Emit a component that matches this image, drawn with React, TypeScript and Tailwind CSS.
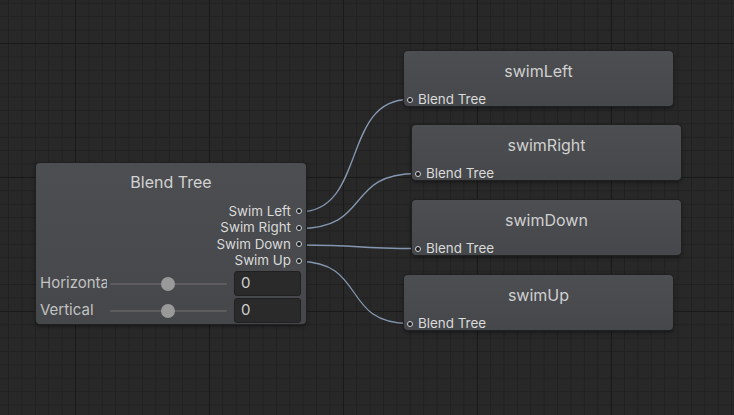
import React from 'react';

type Target = { name: string; x: number; y: number };

const targets: Target[] = [
  { name: 'swimLeft', x: 404, y: 51 },
  { name: 'swimRight', x: 412, y: 125 },
  { name: 'swimDown', x: 412, y: 200 },
  { name: 'swimUp', x: 404, y: 275 },
];

const outputs = ['Swim Left', 'Swim Right', 'Swim Down', 'Swim Up'];

function wire(x1: number, y1: number, x2: number, y2: number) {
  const d = Math.max(40, (x2 - x1) * 0.62);
  return `M ${x1} ${y1} C ${x1 + d} ${y1}, ${x2 - d} ${y2}, ${x2} ${y2}`;
}

function Port() {
  return <span className="block w-[6px] h-[6px] rounded-full border border-[#cfd3d8] bg-[#1c1c1c] shrink-0" />;
}

function ParamRow({ label }: { label: string }) {
  return (
    <div className="flex items-center h-[25px]">
      <div className="w-[71px] pl-[4px] overflow-hidden whitespace-nowrap text-[15px] text-[#c2c2c2]">{label}</div>
      <div className="relative w-[117px] ml-[3px] h-[14px] flex items-center">
        <div className="w-full h-[2px] bg-[#5d5d5d] rounded" />
        <div className="absolute left-[51px] w-[14px] h-[14px] rounded-full bg-[#999999]" />
      </div>
      <div className="ml-[7px] w-[67px] h-[25px] rounded-[3px] bg-[#2a2a2a] border border-[#202020] flex items-center pl-[6px] text-[15px] text-[#d0d0d0]">
        0
      </div>
    </div>
  );
}

export default function App() {
  const ports = [212, 228.5, 245, 261.5];
  return (
    <div
      className="relative w-[734px] h-[415px] overflow-hidden bg-[#282828] [font-family:Inter,'Noto_Sans',sans-serif] bg-[linear-gradient(to_right,#1a1a1a_1px,transparent_1px),linear-gradient(to_bottom,#1a1a1a_1px,transparent_1px),linear-gradient(to_right,#212121_1px,transparent_1px),linear-gradient(to_bottom,#212121_1px,transparent_1px)] [background-size:134px_134px,134px_134px,13.4px_13.4px,13.4px_13.4px] [background-position:75px_43px,75px_43px,75px_43px,75px_43px]"
    >
      <svg className="absolute inset-0" width={734} height={415}>
        {targets.map((t, i) => (
          <path
            key={t.name}
            d={wire(299, ports[i], t.x + 5, t.y + 48.5)}
            fill="none"
            stroke="#8497b0"
            strokeWidth={1.3}
          />
        ))}
      </svg>

      {/* Blend Tree node */}
      <div className="absolute left-[36px] top-[163px] w-[270px] h-[161px] rounded-[4px] bg-[linear-gradient(to_bottom,#4c4e51,#45474a)] shadow-[0_0_0_1px_#202020,0_2px_4px_rgba(0,0,0,0.5)] flex flex-col">
        <div className="pt-[9px] h-[29px] leading-[20px] text-center text-[16px] text-[#d2d2d2]">Blend Tree</div>
        <div className="mt-[11px] flex flex-col items-end pr-[4px]">
          {outputs.map((o) => (
            <div key={o} className="h-[16.5px] flex items-center gap-[5px] text-[13.4px] text-[#dadada] leading-none">
              <span>{o}</span>
              <Port />
            </div>
          ))}
        </div>
        <div className="mt-[2px] flex flex-col gap-[2px]">
          <ParamRow label="Horizontal" />
          <ParamRow label="Vertical" />
        </div>
      </div>

      {targets.map((t) => (
        <div
          key={t.name}
          className="absolute w-[269px] h-[55px] rounded-[4px] bg-[linear-gradient(to_bottom,#4c4e51,#45474a)] shadow-[0_0_0_1px_#202020,0_2px_4px_rgba(0,0,0,0.5)] flex flex-col"
          style={{ left: t.x, top: t.y }}
        >
          <div className="pt-[10px] h-[30px] leading-[20px] text-center text-[16px] text-[#d0d0d0]">{t.name}</div>
          <div className="mt-[12px] flex items-center gap-[5px] pl-[3px] text-[13.4px] text-[#dadada] leading-none">
            <Port />
            <span>Blend Tree</span>
          </div>
        </div>
      ))}
    </div>
  );
}
